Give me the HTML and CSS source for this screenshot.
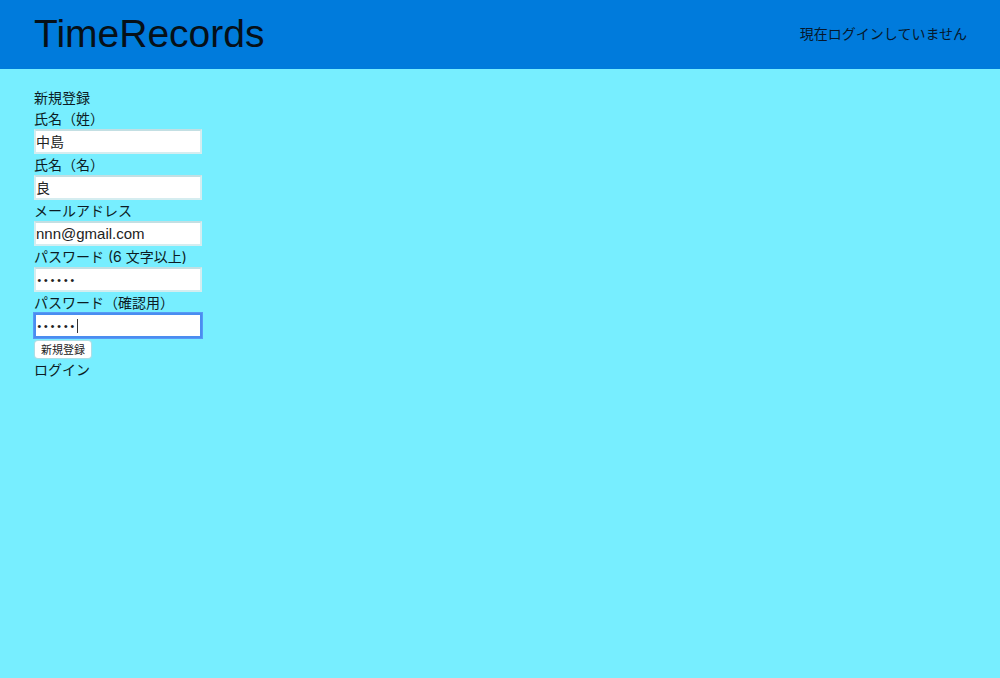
FILE: index.html
```html
<!DOCTYPE html>
<html lang="ja">
<head>
<meta charset="utf-8">
<meta name="viewport" content="width=device-width, initial-scale=1">
<title>TimeRecords</title>
<link rel="stylesheet" href="styles.css">
</head>
<body>
<header class="header">
  <h1 class="logo">TimeRecords</h1>
  <p class="status">現在ログインしていません</p>
</header>
<main class="main">
  <h2 class="heading">新規登録</h2>
  <form class="form">
    <label class="label" for="last-name">氏名（姓）</label>
    <input class="input" id="last-name" type="text" value="中島">
    <label class="label" for="first-name">氏名（名）</label>
    <input class="input" id="first-name" type="text" value="良">
    <label class="label" for="email">メールアドレス</label>
    <input class="input input-email" id="email" type="email" value="nnn@gmail.com">
    <label class="label" for="password">パスワード (6 文字以上)</label>
    <input class="input input-password" id="password" type="password" value="secret">
    <label class="label" for="password-confirm">パスワード（確認用）</label>
    <div class="field-active">
      <input class="input input-password input-active" id="password-confirm" type="password" value="secret">
    </div>
    <button class="button" type="button">新規登録</button>
  </form>
  <a class="link" href="#">ログイン</a>
</main>
</body>
</html>
```

FILE: styles.css
```css
* {
  box-sizing: border-box;
}

body {
  margin: 0;
  background: #77eeff;
  color: #0c1c24;
  font-family: Inter, "Noto Sans CJK JP", sans-serif;
  font-size: 14px;
  line-height: 21px;
}

.header {
  display: flex;
  align-items: center;
  justify-content: space-between;
  padding: 11px 33px 13px 34px;
  background: #007bdc;
}

.logo {
  margin: 0;
  color: #061018;
  font-family: "Liberation Sans", Arial, sans-serif;
  font-size: 39px;
  font-weight: 400;
  line-height: 45px;
}

.status {
  margin: 0;
  color: #06182c;
}

.main {
  padding: 18px 34px;
}

.heading {
  margin: 0;
  font-size: 14px;
  font-weight: 400;
}

.form {
  display: flex;
  flex-direction: column;
  align-items: flex-start;
}

.input {
  display: block;
  width: 168px;
  height: 25px;
  padding: 0 0 2px;
  border: 2px solid #d5edf0;
  border-top-color: #c3dfe3;
  border-radius: 0;
  outline: none;
  background: #fff;
  color: #222;
  font-family: inherit;
  font-size: 14px;
}

.input-email {
  padding: 0;
  font-family: "Liberation Sans", Arial, sans-serif;
  font-size: 15px;
}

.input-password {
  padding: 3px 0 0;
  font-family: "Liberation Mono", monospace;
  font-size: 11px;
}

.input-active {
  border-color: #4a8df0;
  box-shadow: 0 0 0 1px #579af5;
  caret-color: transparent;
}

.field-active {
  position: relative;
}

.field-active::after {
  content: "";
  position: absolute;
  top: 6px;
  left: 43px;
  width: 1px;
  height: 14px;
  background: #333;
}

.button {
  height: 17px;
  margin: 3px 0 1px 1px;
  padding: 1px 6px 0;
  border: 0;
  border-radius: 3px;
  background: #fff;
  box-shadow: 0 0 1px 1px #b3dce3;
  color: #222;
  font-family: inherit;
  font-size: 11px;
  line-height: 16px;
}

.link {
  color: inherit;
  text-decoration: none;
}
```
